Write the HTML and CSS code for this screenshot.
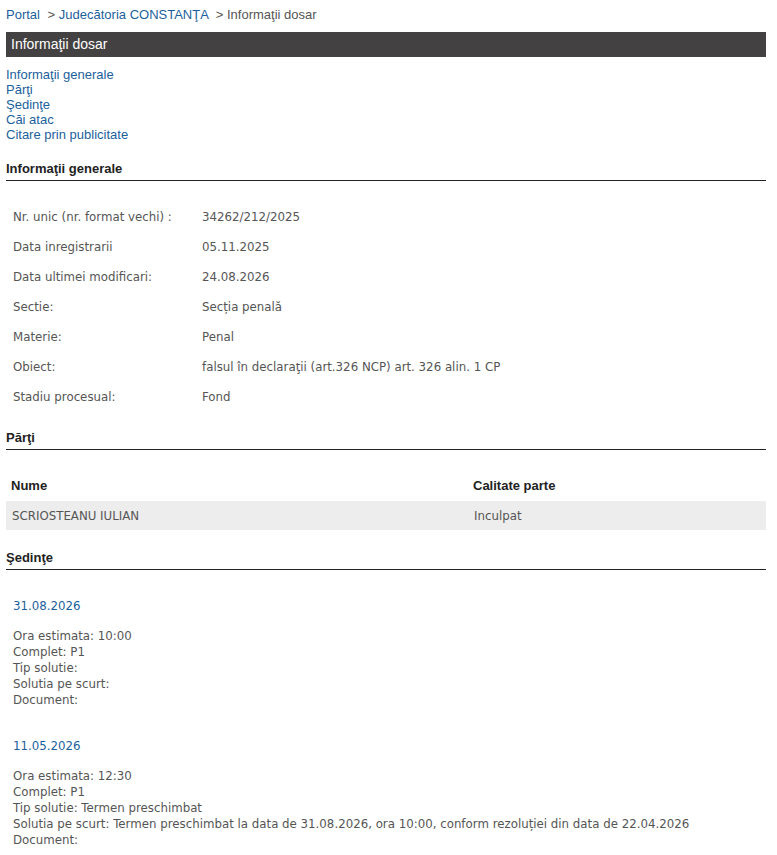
FILE: index.html
```html
<!DOCTYPE html>
<html lang="ro">
<head>
    <meta charset="UTF-8">
    <meta name="viewport" content="width=device-width, initial-scale=1.0">
    <title>Informaţii dosar</title>
    <link rel="stylesheet" href="styles.css">
</head>
<body>
<div class="page">
    <div class="breadcrumb">
        <a href="#">Portal</a>
        <span class="sep">&gt;</span> <a href="#">Judecătoria CONSTANŢA</a>
        <span class="sep">&gt;</span> <span class="current">Informaţii dosar</span>
    </div>

    <div class="title-bar">Informaţii dosar</div>

    <ul class="toc">
        <li><a href="#generale">Informaţii generale</a></li>
        <li><a href="#parti">Părţi</a></li>
        <li><a href="#sedinte">Şedinţe</a></li>
        <li><a href="#atac">Căi atac</a></li>
        <li><a href="#citare">Citare prin publicitate</a></li>
    </ul>

    <h2 class="section-title" id="generale">Informaţii generale</h2>
    <table class="info">
        <tr><td class="label">Nr. unic (nr. format vechi) :</td><td>34262/212/2025</td></tr>
        <tr><td class="label">Data inregistrarii</td><td>05.11.2025</td></tr>
        <tr><td class="label">Data ultimei modificari:</td><td>24.08.2026</td></tr>
        <tr><td class="label">Sectie:</td><td>Secția penală</td></tr>
        <tr><td class="label">Materie:</td><td>Penal</td></tr>
        <tr><td class="label">Obiect:</td><td>falsul în declaraţii (art.326 NCP) art. 326 alin. 1 CP</td></tr>
        <tr><td class="label">Stadiu procesual:</td><td>Fond</td></tr>
    </table>

    <h2 class="section-title" id="parti">Părţi</h2>
    <table class="parties">
        <thead>
            <tr><th class="col-name">Nume</th><th>Calitate parte</th></tr>
        </thead>
        <tbody>
            <tr><td>SCRIOSTEANU IULIAN</td><td>Inculpat</td></tr>
        </tbody>
    </table>

    <h2 class="section-title" id="sedinte">Şedinţe</h2>
    <div class="hearing">
        <div class="hearing-date">31.08.2026</div>
        <div class="hearing-info">
            Ora estimata: 10:00<br>
            Complet: P1<br>
            Tip solutie: <br>
            Solutia pe scurt: <br>
            Document:
        </div>
    </div>
    <div class="hearing">
        <div class="hearing-date">11.05.2026</div>
        <div class="hearing-info">
            Ora estimata: 12:30<br>
            Complet: P1<br>
            Tip solutie: Termen preschimbat<br>
            Solutia pe scurt: Termen preschimbat la data de 31.08.2026, ora 10:00, conform rezoluției din data de 22.04.2026<br>
            Document:
        </div>
    </div>
</div>
</body>
</html>
```

FILE: styles.css
```css
body {
    margin: 0;
    font-family: "Liberation Sans", Arial, sans-serif;
    background: #fff;
}
.page {
    width: 760px;
    margin-left: 6px;
    padding-top: 6px;
}
a {
    color: #1c5f9c;
    text-decoration: none;
}
.breadcrumb {
    font-size: 13px;
    line-height: 17px;
    color: #555;
}
.breadcrumb .sep {
    margin-left: 4px;
}
.title-bar {
    margin-top: 9px;
    height: 25px;
    line-height: 25px;
    padding-left: 5px;
    background-color: #434142;
    color: #fff;
    font-size: 14px;
}
.toc {
    list-style: none;
    margin: 10px 0 0;
    padding: 0;
    font-size: 13px;
    line-height: 15px;
}
.section-title {
    margin: 0;
    font-size: 13px;
    font-weight: bold;
    color: #222;
    border-bottom: 1px solid #222;
    padding-bottom: 3px;
    line-height: 16px;
}
#generale {
    margin-top: 19px;
}
.info {
    border-collapse: collapse;
    margin: 21px 0 18px;
    font-family: "DejaVu Sans", sans-serif;
    font-size: 11.8px;
    color: #555;
}
.info td {
    height: 30px;
    padding: 0 0 0 7px;
    vertical-align: middle;
}
.info td.label {
    width: 182px;
}
.parties {
    width: 100%;
    border-collapse: collapse;
    margin: 19px 0 20px;
}
.parties th {
    text-align: left;
    font-size: 13px;
    color: #222;
    height: 32px;
    padding: 0 0 0 5px;
}
.parties th.col-name {
    width: 457px;
}
.parties td {
    background-color: #ededed;
    height: 29px;
    padding: 0 0 0 6px;
    font-family: "DejaVu Sans", sans-serif;
    font-size: 11.8px;
    color: #555;
}
.hearing {
    padding-left: 7px;
    font-family: "DejaVu Sans", sans-serif;
    font-size: 11.8px;
}
.hearing-date {
    color: #1c5f9c;
    margin-top: 30px;
    line-height: 16px;
}
.section-title + .hearing .hearing-date {
    margin-top: 28px;
}
.hearing-info {
    margin-top: 14px;
    color: #555;
    line-height: 16px;
}
```
